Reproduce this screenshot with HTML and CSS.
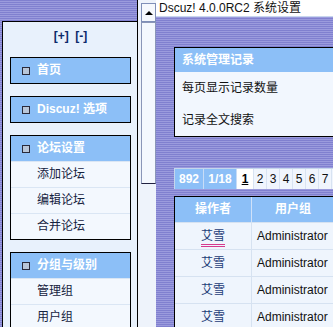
FILE: index.html
```html
<!DOCTYPE html>
<html lang="zh-CN">
<head>
    <meta charset="UTF-8">
    <title>Discuz! 系统设置</title>
    <link rel="stylesheet" href="styles.css">
</head>
<body>
    <!-- 左侧菜单 -->
    <div class="side">
        <div class="side-top"></div>
        <div class="menu">
            <div class="menu-tool">[+]&nbsp; [-]</div>

            <div class="box">
                <div class="box-head"><span class="sq"></span>首页</div>
            </div>

            <div class="box">
                <div class="box-head"><span class="sq"></span>Discuz! 选项</div>
            </div>

            <div class="box">
                <div class="box-head"><span class="sq"></span>论坛设置</div>
                <div class="box-item">添加论坛</div>
                <div class="box-item">编辑论坛</div>
                <div class="box-item">合并论坛</div>
            </div>

            <div class="box">
                <div class="box-head"><span class="sq"></span>分组与级别</div>
                <div class="box-item">管理组</div>
                <div class="box-item">用户组</div>
            </div>
        </div>
    </div>

    <!-- 滚动条 -->
    <div class="scroll">
        <div class="scroll-btn"><span class="arrow"></span></div>
        <div class="scroll-thumb"></div>
    </div>

    <!-- 右侧内容 -->
    <div class="main">
        <div class="title">Dscuz! 4.0.0RC2 系统设置</div>
        <div class="main-body">
            <div class="panel">
                <div class="panel-head">系统管理记录</div>
                <div class="panel-row">每页显示记录数量</div>
                <div class="panel-row">记录全文搜索</div>
            </div>

            <div class="pages">
                <span class="pg-info">892</span>
                <span class="pg-info pg-wide">1/18</span>
                <span class="pg-cur">1</span>
                <span class="pg">2</span>
                <span class="pg">3</span>
                <span class="pg">4</span>
                <span class="pg">5</span>
                <span class="pg">6</span>
                <span class="pg">7</span>
                <span class="pg"></span>
            </div>

            <div class="list">
                <div class="list-row list-head">
                    <div class="c1">操作者</div>
                    <div class="c2">用户组</div>
                </div>
                <div class="list-row">
                    <div class="c1"><span class="user hover">艾雪</span></div>
                    <div class="c2">Administrator</div>
                </div>
                <div class="list-row">
                    <div class="c1"><span class="user">艾雪</span></div>
                    <div class="c2">Administrator</div>
                </div>
                <div class="list-row">
                    <div class="c1"><span class="user">艾雪</span></div>
                    <div class="c2">Administrator</div>
                </div>
                <div class="list-row">
                    <div class="c1"><span class="user">艾雪</span></div>
                    <div class="c2">Administrator</div>
                </div>
            </div>
        </div>
    </div>
</body>
</html>
```

FILE: styles.css
```css
body {
    margin: 0;
    width: 333px;
    height: 327px;
    overflow: hidden;
    display: flex;
    font-family: "Liberation Sans", "Noto Sans CJK SC", sans-serif;
    font-size: 12px;
    background: repeating-linear-gradient(#8080cf 0 1px, #9b9bdd 1px 2px);
}

/* 左侧菜单 */
.side {
    width: 137px;
    flex: none;
    display: flex;
    flex-direction: column;
}

.side-top {
    height: 21px;
    flex: none;
}

.menu {
    flex: 1;
    margin-left: 2px;
    border-left: 1px solid #000;
    border-top: 1px solid #000;
    background: #e8f1fc;
    padding: 0 6px 0 7px;
}

.menu-tool {
    height: 29px;
    line-height: 29px;
    text-align: center;
    font-weight: bold;
    color: #0b2a6b;
    margin-bottom: 6px;
}

.box {
    border: 1px solid #000;
    margin-bottom: 12px;
    background: #f3f8fe;
}

.box-head {
    height: 25px;
    line-height: 25px;
    background: #8cbff7;
    color: white;
    font-weight: bold;
    padding-left: 11px;
    display: flex;
    align-items: center;
    gap: 7px;
}

.sq {
    width: 6px;
    height: 6px;
    border: 1px solid #2a2a3a;
    background: #b9c6d8;
}

.box-item {
    height: 25px;
    line-height: 25px;
    border-top: 1px solid #dae6f4;
    padding-left: 26px;
    color: #16233f;
}

/* 滚动条 */
.scroll {
    width: 19px;
    flex: none;
    border-left: 1px solid #000;
    background: #eef3fb;
    display: flex;
    flex-direction: column;
    padding-left: 3px;
    box-sizing: border-box;
}

.scroll-btn {
    height: 17px;
    margin-top: 3px;
    background: #f5f8fd;
    border: 1px solid #7f8fb8;
    display: flex;
    align-items: center;
    justify-content: center;
}

.arrow {
    width: 0;
    height: 0;
    border-left: 4px solid transparent;
    border-right: 4px solid transparent;
    border-bottom: 4px solid #000;
}

.scroll-thumb {
    height: 160px;
    background: #f4f8fe;
    border: 1px solid #8a96b8;
    border-bottom-color: #202040;
}

/* 右侧内容 */
.main {
    flex: 1;
    overflow: hidden;
    display: flex;
    flex-direction: column;
}

.title {
    height: 16px;
    line-height: 16px;
    background: white;
    color: #111;
    padding-left: 3px;
    white-space: nowrap;
    border-bottom: 1px solid #c8d6ee;
}

.main-body {
    padding: 30px 0 0 18px;
}

.panel {
    width: 260px;
    border: 1px solid #000;
    background: #f2f7fe;
}

.panel-head {
    height: 24px;
    line-height: 24px;
    background: #8cbff7;
    color: white;
    font-weight: bold;
    padding-left: 7px;
}

.panel-row {
    height: 32px;
    line-height: 32px;
    padding-left: 7px;
    color: #111;
}

.pages {
    margin-top: 31px;
    height: 20px;
    display: flex;
    width: 260px;
    border-top: 1px solid #c6d6ec;
    border-left: 1px solid #c6d6ec;
}

.pages span {
    height: 20px;
    line-height: 20px;
    text-align: center;
    border-right: 1px solid #d8e3f2;
    box-sizing: border-box;
}

.pg-info {
    width: 29px;
    background: #8cbff7;
    color: white;
    font-weight: bold;
    border-right-color: #c8dcf6 !important;
}

.pg-wide {
    width: 33px;
}

.pg-cur {
    width: 17px;
    background: white;
    font-weight: bold;
    text-decoration: underline;
    color: #000;
}

.pg {
    width: 13px;
    background: #f0f5fd;
    color: #111;
}

.list {
    margin-top: 7px;
    width: 260px;
    border: 1px solid #000;
    border-bottom: none;
    background: #eff5fd;
}

.list-row {
    display: flex;
    height: 26px;
    line-height: 26px;
    border-top: 1px solid #d6e2f1;
}

.list-row:first-child {
    border-top: none;
}

.list-head {
    height: 25px;
    line-height: 25px;
    background: #8cbff7;
    color: white;
    font-weight: bold;
}

.c1 {
    width: 76px;
    text-align: center;
    border-right: 1px solid #d6e2f1;
}

.list-head .c1 {
    border-right-color: #cfe1f9;
}

.c2 {
    flex: 1;
    padding-left: 5px;
    color: #111;
}

.list-head .c2 {
    padding-left: 0;
    width: 82px;
    flex: none;
    text-align: center;
    color: white;
}

.user {
    color: #1d3c78;
}

.user.hover {
    border-bottom: 3px double #d63a8e;
    padding-bottom: 1px;
}
```
